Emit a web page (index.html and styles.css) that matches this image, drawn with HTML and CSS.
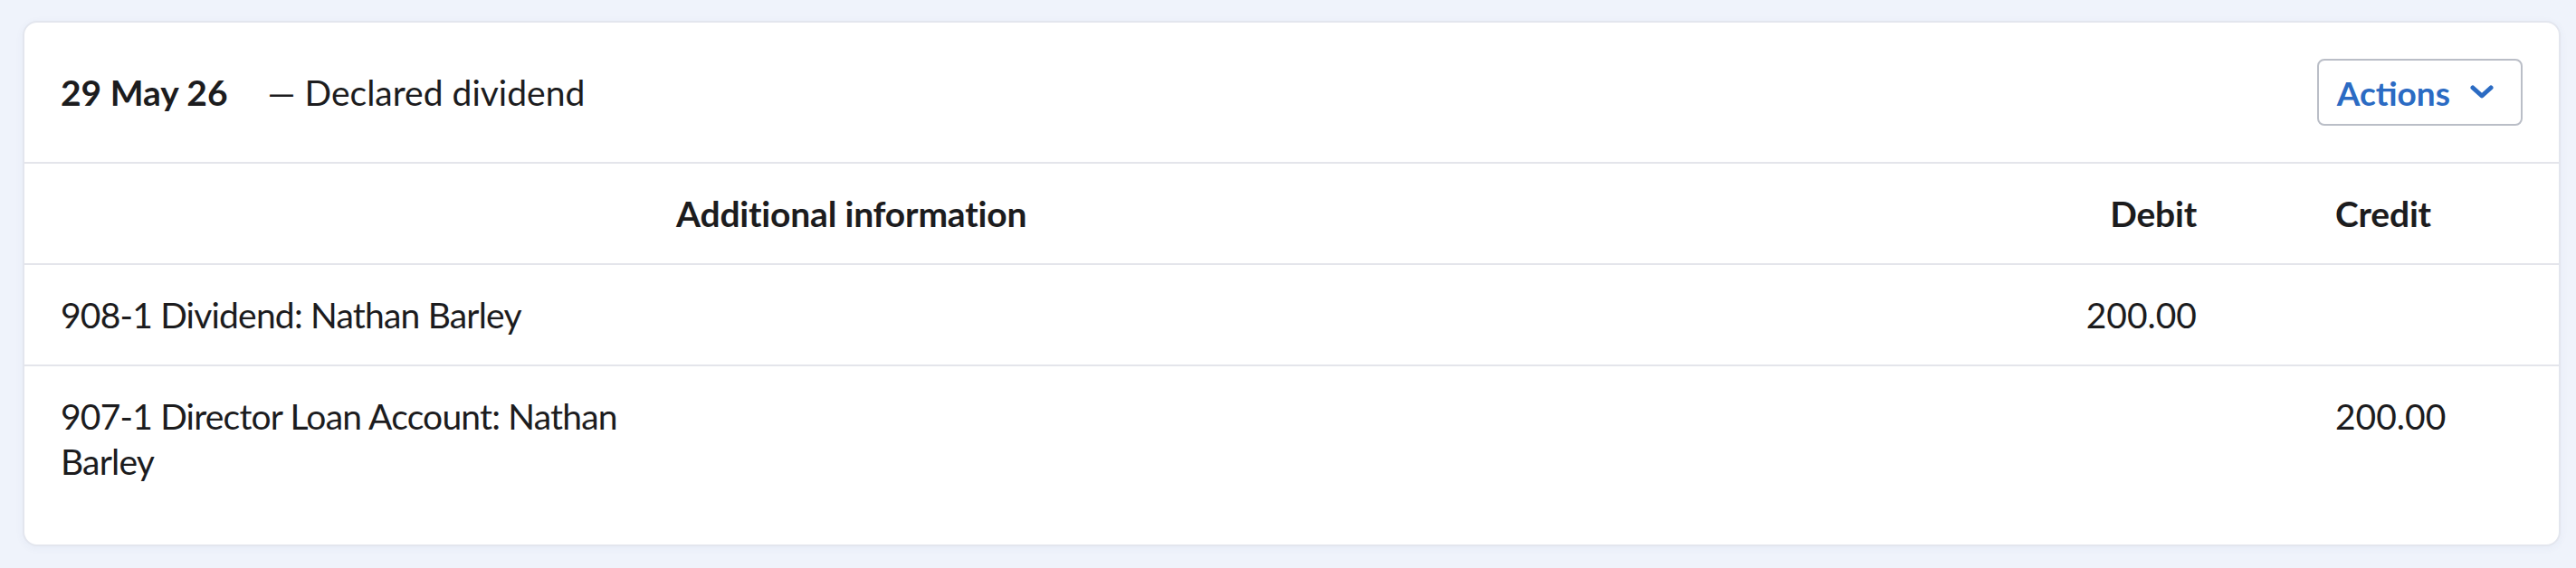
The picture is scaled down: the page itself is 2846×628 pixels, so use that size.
FILE: index.html
```html
<!DOCTYPE html>
<html lang="en">
<head>
<meta charset="utf-8">
<title>Journal entry</title>
<link rel="stylesheet" href="styles.css">
</head>
<body>
<main class="page">
  <section class="card">
    <header class="card-header">
      <h2 class="entry-title"><span class="entry-date">29 May 26</span><span class="entry-desc">— Declared dividend</span></h2>
      <button class="actions-btn" type="button">
        <span>Actions</span>
        <svg class="chevron" width="26" height="16" viewBox="0 0 26 16" aria-hidden="true"><path d="M3 3 L13 12 L23 3" fill="none" stroke="currentColor" stroke-width="5" stroke-linecap="round" stroke-linejoin="round"/></svg>
      </button>
    </header>
    <div class="table-wrap">
      <table class="ledger">
        <colgroup>
          <col class="col-account">
          <col class="col-info">
          <col class="col-debit">
          <col class="col-credit">
        </colgroup>
        <thead>
          <tr>
            <th class="cell-account"></th>
            <th class="cell-info">Additional information</th>
            <th class="cell-debit">Debit</th>
            <th class="cell-credit">Credit</th>
          </tr>
        </thead>
        <tbody>
          <tr>
            <td class="cell-account">908-1 Dividend: Nathan Barley</td>
            <td class="cell-info"></td>
            <td class="cell-debit">200.00</td>
            <td class="cell-credit"></td>
          </tr>
          <tr class="last-row">
            <td class="cell-account">907-1 Director Loan Account: Nathan Barley</td>
            <td class="cell-info"></td>
            <td class="cell-debit"></td>
            <td class="cell-credit">200.00</td>
          </tr>
        </tbody>
      </table>
    </div>
  </section>
</main>
</body>
</html>
```
FILE: styles.css
```css
* { box-sizing: border-box; }
html, body { margin: 0; padding: 0; }
body {
  background: #eff3fb;
  font-family: "Lato", "Liberation Sans", sans-serif;
  color: #1c1c1e;
}
.page {
  padding: 23px 17px 23px 25px;
}
.card {
  background: #ffffff;
  border: 2px solid #e3e6ee;
  border-radius: 16px;
  box-shadow: 0 2px 10px rgba(60, 80, 130, 0.05);
  overflow: hidden;
}
.card-header {
  display: flex;
  align-items: center;
  justify-content: space-between;
  padding: 40px 40px;
  border-bottom: 2px solid #e4e5eb;
}
.entry-title {
  margin: 0;
  font-size: 39px;
  line-height: 50px;
  font-weight: 400;
  display: flex;
  gap: 44px;
}
.entry-date { font-weight: 700; }
.actions-btn {
  display: flex;
  align-items: center;
  gap: 22px;
  height: 74px;
  padding: 0 30px 0 20px;
  background: #ffffff;
  border: 2px solid #babec7;
  border-radius: 8px;
  color: #2b6bc3;
  font-family: inherit;
  font-size: 37px;
  font-weight: 700;
  cursor: pointer;
}
.chevron { display: block; }
.table-wrap {
  padding-bottom: 37px;
}
.ledger {
  width: 100%;
  border-collapse: collapse;
  table-layout: fixed;
  font-size: 39px;
  line-height: 50px;
}
.col-account { width: 700px; }
.col-debit { width: 300px; }
.col-credit { width: 360px; }
.ledger th, .ledger td {
  padding: 30px 0;
  text-align: left;
  vertical-align: top;
  border-bottom: 2px solid #e4e5eb;
}
.ledger th { font-weight: 700; letter-spacing: -0.2px; }
.ledger .last-row td { border-bottom: none; }
.ledger td.cell-account { letter-spacing: -0.8px; }
.cell-account { padding-left: 40px !important; }
.cell-info { padding-left: 20px !important; }
.ledger .cell-debit { text-align: right; padding-right: 40px; }
.cell-credit { padding-left: 113px !important; }
```
